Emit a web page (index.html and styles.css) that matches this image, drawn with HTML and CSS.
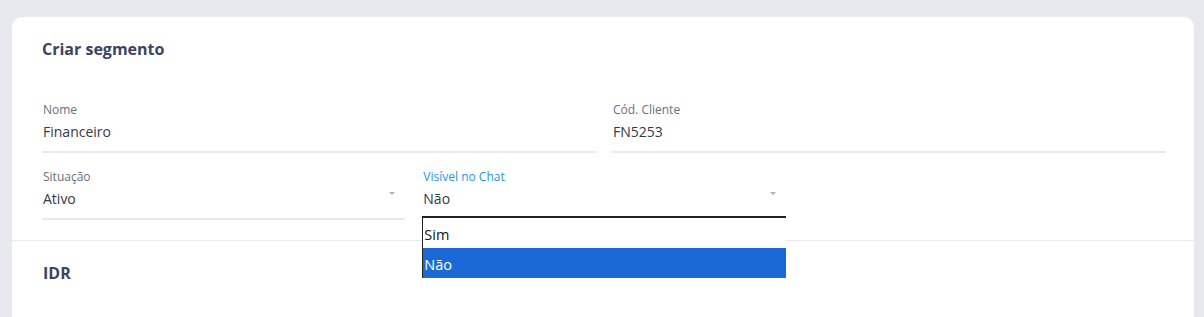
FILE: index.html
```html
<!DOCTYPE html>
<html lang="pt-BR">
<head>
    <meta charset="UTF-8">
    <meta name="viewport" content="width=device-width, initial-scale=1.0">
    <title>Criar segmento</title>
    <link rel="stylesheet" href="styles.css">
</head>
<body>
    <div class="page">
        <div class="card">
            <div class="card-header">
                <h2>Criar segmento</h2>
            </div>
            <div class="card-body">
                <div class="row cols-2">
                    <div class="field">
                        <label>Nome</label>
                        <div class="value">Financeiro</div>
                    </div>
                    <div class="field">
                        <label>Cód. Cliente</label>
                        <div class="value">FN5253</div>
                    </div>
                </div>
                <div class="row cols-3">
                    <div class="field">
                        <label>Situação</label>
                        <div class="value select">Ativo <span class="arrow"></span></div>
                    </div>
                    <div class="field focused">
                        <label>Visível no Chat</label>
                        <div class="value select">Não <span class="arrow"></span></div>
                        <div class="listbox">
                            <div class="option">Sim</div>
                            <div class="option selected">Não</div>
                        </div>
                    </div>
                </div>
            </div>
            <div class="card-section">
                <h2>IDR</h2>
            </div>
        </div>
    </div>
</body>
</html>
```

FILE: styles.css
```css
body {
    margin: 0;
    background-color: #e8e8ef;
    font-family: "Open Sans", Arial, sans-serif;
    overflow: hidden;
}
.page {
    padding: 17px 10px 0 12px;
}
.card {
    background: white;
    border-radius: 10px;
    height: 320px;
}
h2 {
    margin: 0;
    font-family: "Open Sans", Lato, sans-serif;
    font-size: 16px;
    font-weight: 700;
    line-height: 20px;
    color: #3b4364;
}
.card-header {
    padding: 22px 30px 0;
}
.card-body {
    padding: 43px 28px 20px 30px;
    border-bottom: 1px solid #e8e8ef;
}
.card-section {
    padding: 22px 31px;
}
.row {
    display: grid;
    column-gap: 16px;
}
.row + .row {
    margin-top: 16px;
}
.cols-2 {
    grid-template-columns: 1fr 1fr;
}
.cols-3 {
    grid-template-columns: 1fr 1fr 1fr;
    column-gap: 17px;
}
.field {
    position: relative;
    padding-left: 1px;
    border-bottom: 2px solid #e8e8ef;
}
.field label {
    display: block;
    font-size: 12px;
    line-height: 16px;
    color: #6b6e7e;
}
.value {
    margin-top: 4px;
    padding-bottom: 9px;
    font-size: 14px;
    line-height: 20px;
    color: #363844;
}
.select {
    display: flex;
    justify-content: space-between;
}
.arrow {
    width: 0;
    height: 0;
    margin: 3px 10px 0 0;
    border-left: 3px solid transparent;
    border-right: 3px solid transparent;
    border-top: 3px solid #aeb0ba;
}
.focused label {
    color: #2196f3;
}
.focused {
    border-bottom-color: #2196f3;
}
.listbox {
    position: absolute;
    left: 0;
    right: 0;
    top: calc(100% - 2px);
    background: white;
    border-top: 2px solid #222;
    border-left: 1px solid #222;
}
.option {
    height: 27px;
    padding: 3px 0 0 1px;
    line-height: 27px;
    font-size: 14.5px;
    color: #111;
}
.option.selected {
    background: #1a69d4;
    color: white;
}
```
